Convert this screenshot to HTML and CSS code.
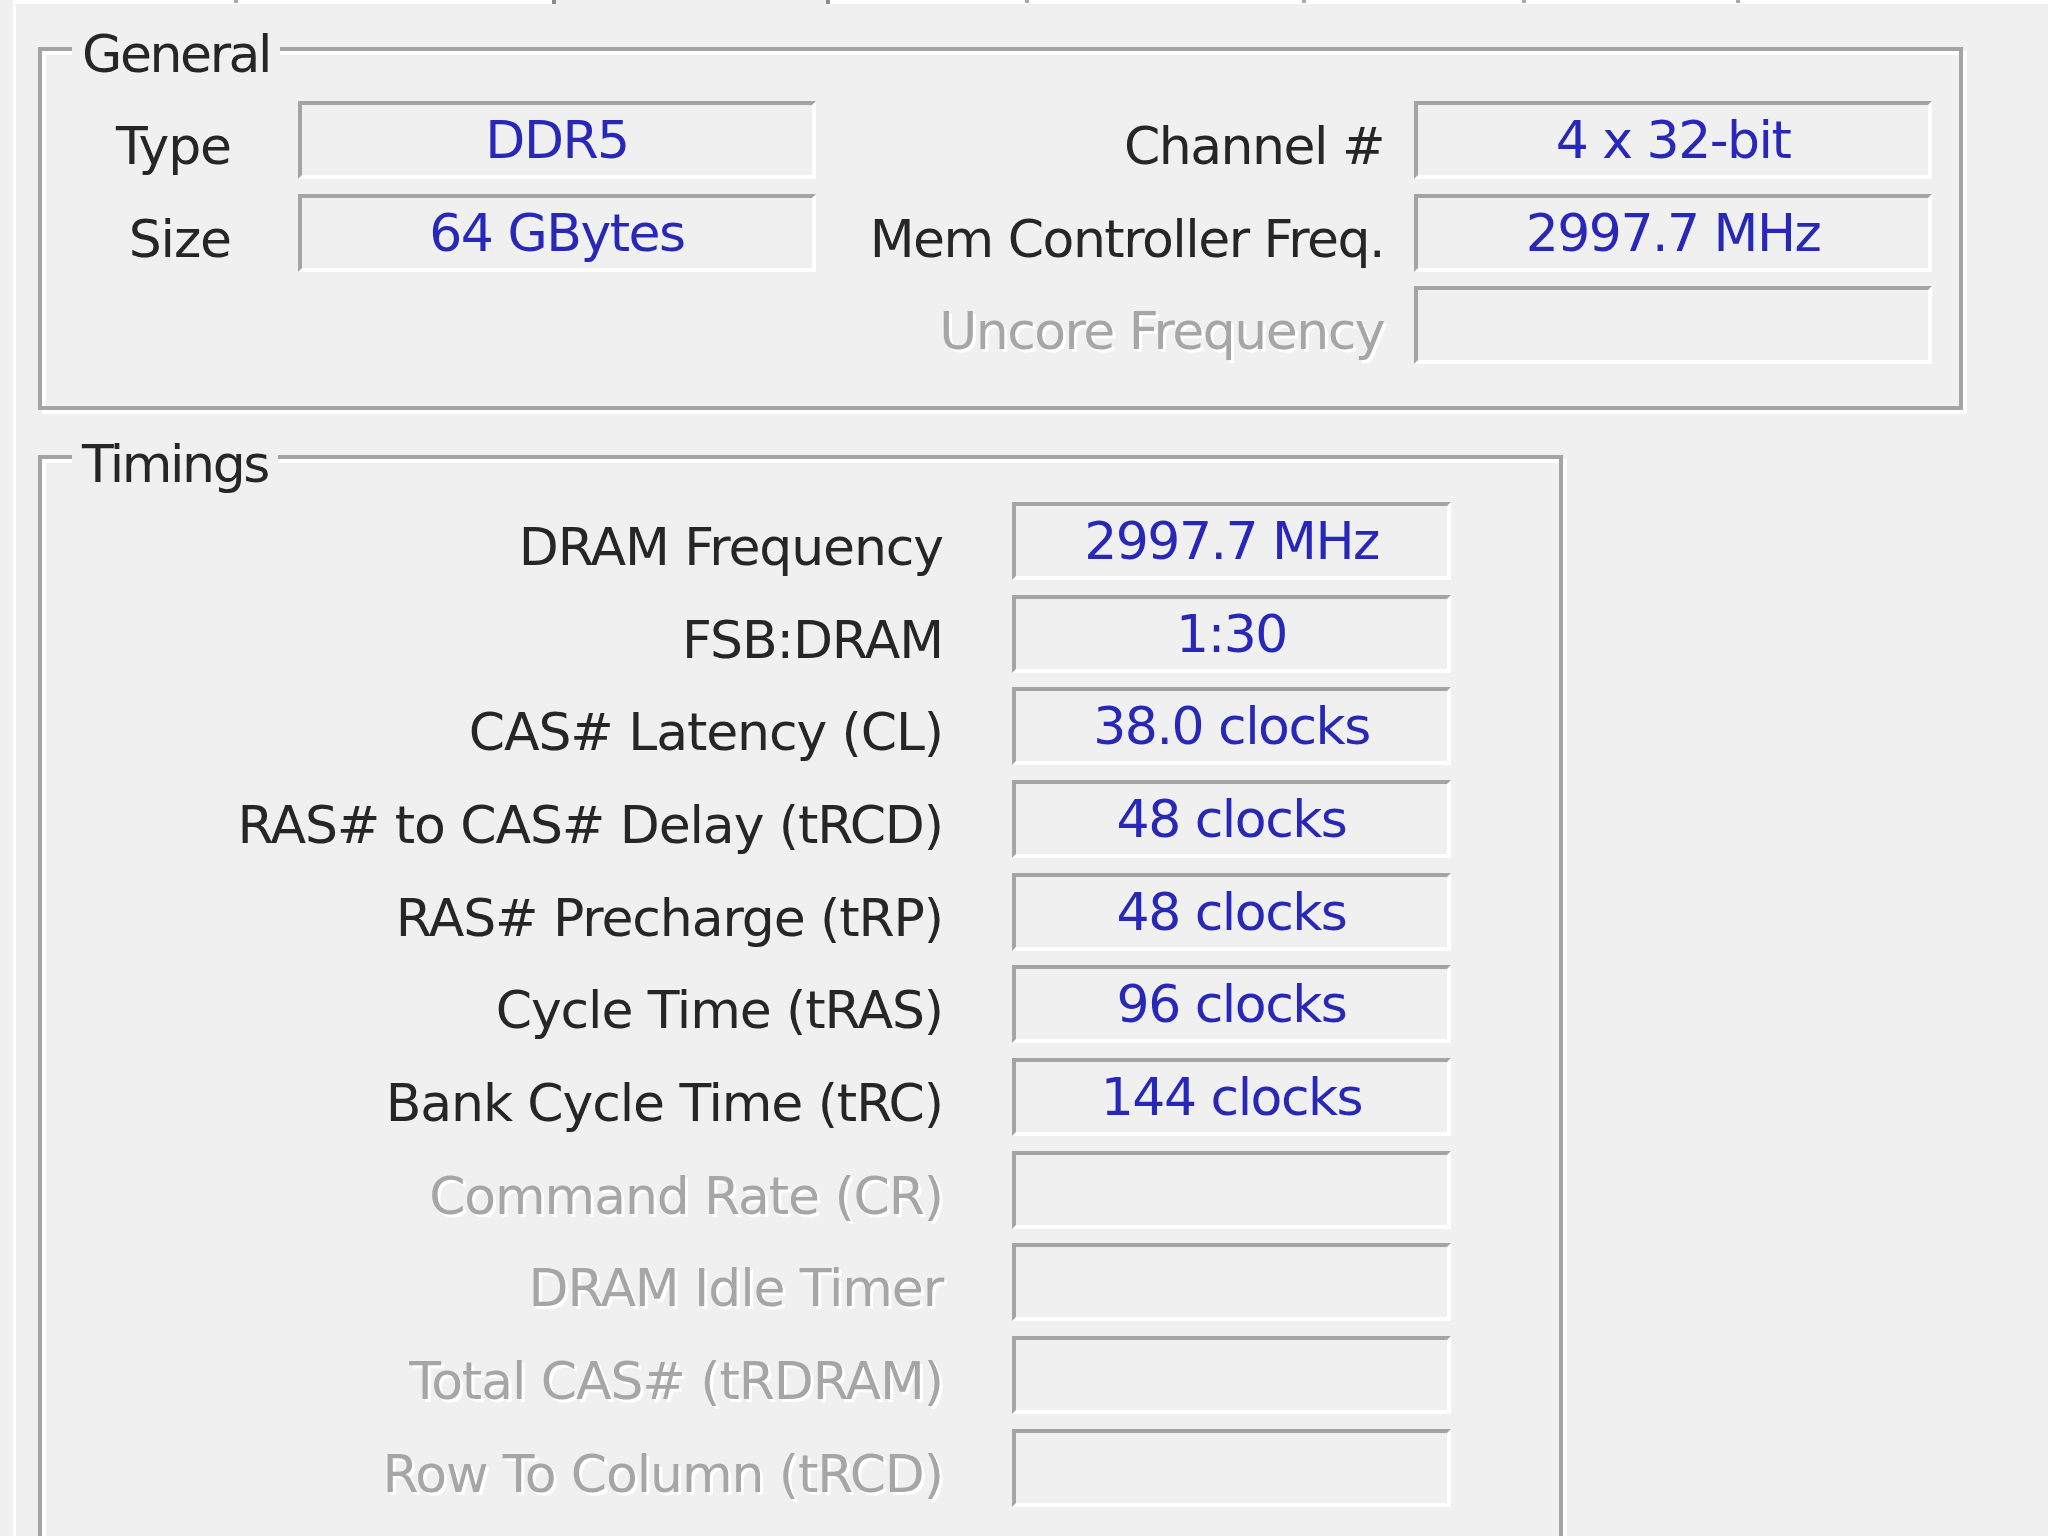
FILE: index.html
```html
<!DOCTYPE html>
<html lang="en">
<head>
<meta charset="utf-8">
<title>CPU-Z Memory</title>
<link rel="stylesheet" href="styles.css">
</head>
<body>
<div class="tabedge"></div>
<main class="panel">
  <section class="group general">
    <div class="group-title"><span>General</span></div>
    <div class="grid general-grid">
      <div class="label">Type</div>
      <div class="field">DDR5</div>
      <div class="label label-wide">Channel #</div>
      <div class="field">4 x 32-bit</div>

      <div class="label">Size</div>
      <div class="field">64 GBytes</div>
      <div class="label label-wide">Mem Controller Freq.</div>
      <div class="field">2997.7 MHz</div>

      <div class="label"></div>
      <div></div>
      <div class="label label-wide disabled">Uncore Frequency</div>
      <div class="field"></div>
    </div>
  </section>

  <section class="group timings">
    <div class="group-title"><span>Timings</span></div>
    <div class="grid timings-grid">
      <div class="label">DRAM Frequency</div>
      <div class="field">2997.7 MHz</div>
      <div class="label">FSB:DRAM</div>
      <div class="field">1:30</div>
      <div class="label">CAS# Latency (CL)</div>
      <div class="field">38.0 clocks</div>
      <div class="label">RAS# to CAS# Delay (tRCD)</div>
      <div class="field">48 clocks</div>
      <div class="label">RAS# Precharge (tRP)</div>
      <div class="field">48 clocks</div>
      <div class="label">Cycle Time (tRAS)</div>
      <div class="field">96 clocks</div>
      <div class="label">Bank Cycle Time (tRC)</div>
      <div class="field">144 clocks</div>
      <div class="label disabled">Command Rate (CR)</div>
      <div class="field"></div>
      <div class="label disabled">DRAM Idle Timer</div>
      <div class="field"></div>
      <div class="label disabled">Total CAS# (tRDRAM)</div>
      <div class="field"></div>
      <div class="label disabled">Row To Column (tRCD)</div>
      <div class="field"></div>
    </div>
  </section>
</main>
</body>
</html>
```
FILE: styles.css
```css
* {
  box-sizing: border-box;
}

html,
body {
  margin: 0;
  height: 1536px;
  overflow: hidden;
  background: #f0f0f0;
}

body {
  font-family: "DejaVu Sans", Verdana, sans-serif;
  font-size: 52px;
  letter-spacing: -1.5px;
  color: #262626;
}

/* bottom edge of the tab strip */
.tabedge {
  height: 5px;
  background:
    linear-gradient(to right,
      transparent 234px, #a8a8a8 234px 238px, transparent 238px 1025px,
      #a8a8a8 1025px 1029px, transparent 1029px 1302px,
      #a8a8a8 1302px 1306px, transparent 1306px 1522px,
      #a8a8a8 1522px 1526px, transparent 1526px 1736px,
      #a8a8a8 1736px 1740px, transparent 1740px) 0 0 / 100% 3px no-repeat,
    linear-gradient(to right,
      #f0f0f0 13px, #ffffff 13px 552px, #8c8c8c 552px 556px,
      #f0f0f0 556px 826px, #8c8c8c 826px 830px, #ffffff 830px) 0 0 / 100% 4px no-repeat,
    #f0f0f0;
}

.panel {
  margin-left: 13px;
  border-left: 3px solid #ffffff;
  padding: 42px 0 0 22px;
  min-height: 1600px;
  filter: blur(0.6px);
}

.group {
  border: 4px solid #a4a4a4;
  box-shadow: inset 4px 4px 0 #ffffff, 4px 4px 0 #ffffff;
}

.general {
  width: 1925px;
}

.timings {
  width: 1525px;
  margin-top: 45px;
  padding-bottom: 120px;
}

.group-title {
  display: flex;
  height: 54px;
}

.general .group-title {
  margin-top: -24px;
}

.timings .group-title {
  margin-top: -22px;
}

.group-title span {
  margin-left: 30px;
  padding: 0 10px;
  background: #f0f0f0;
  line-height: 54px;
  letter-spacing: -2.4px;
  white-space: nowrap;
}

.grid {
  display: grid;
  grid-auto-rows: 78px;
  row-gap: 14.7px;
}

.general-grid {
  grid-template-columns: 256px 518px 598px 518px;
  padding-top: 20px;
  padding-bottom: 41.6px;
}

.timings-grid {
  grid-template-columns: 970px 439px;
  padding-top: 11px;
}

.label {
  text-align: right;
  white-space: nowrap;
  padding-top: 12px;
  line-height: 66px;
  letter-spacing: -1.1px;
}

.general-grid .label {
  padding-right: 67px;
}

.general-grid .label-wide {
  padding-right: 30px;
  letter-spacing: -1.5px;
}

.timings-grid .label {
  padding-right: 69px;
}

.field {
  border-style: solid;
  border-width: 4px;
  border-color: #a4a4a4 #ffffff #ffffff #a4a4a4;
  text-align: center;
  line-height: 70px;
  color: #2828b8;
  white-space: nowrap;
}

.disabled {
  color: #a6a6a6;
  text-shadow: 3px 3px 0 #ffffff;
}
```
